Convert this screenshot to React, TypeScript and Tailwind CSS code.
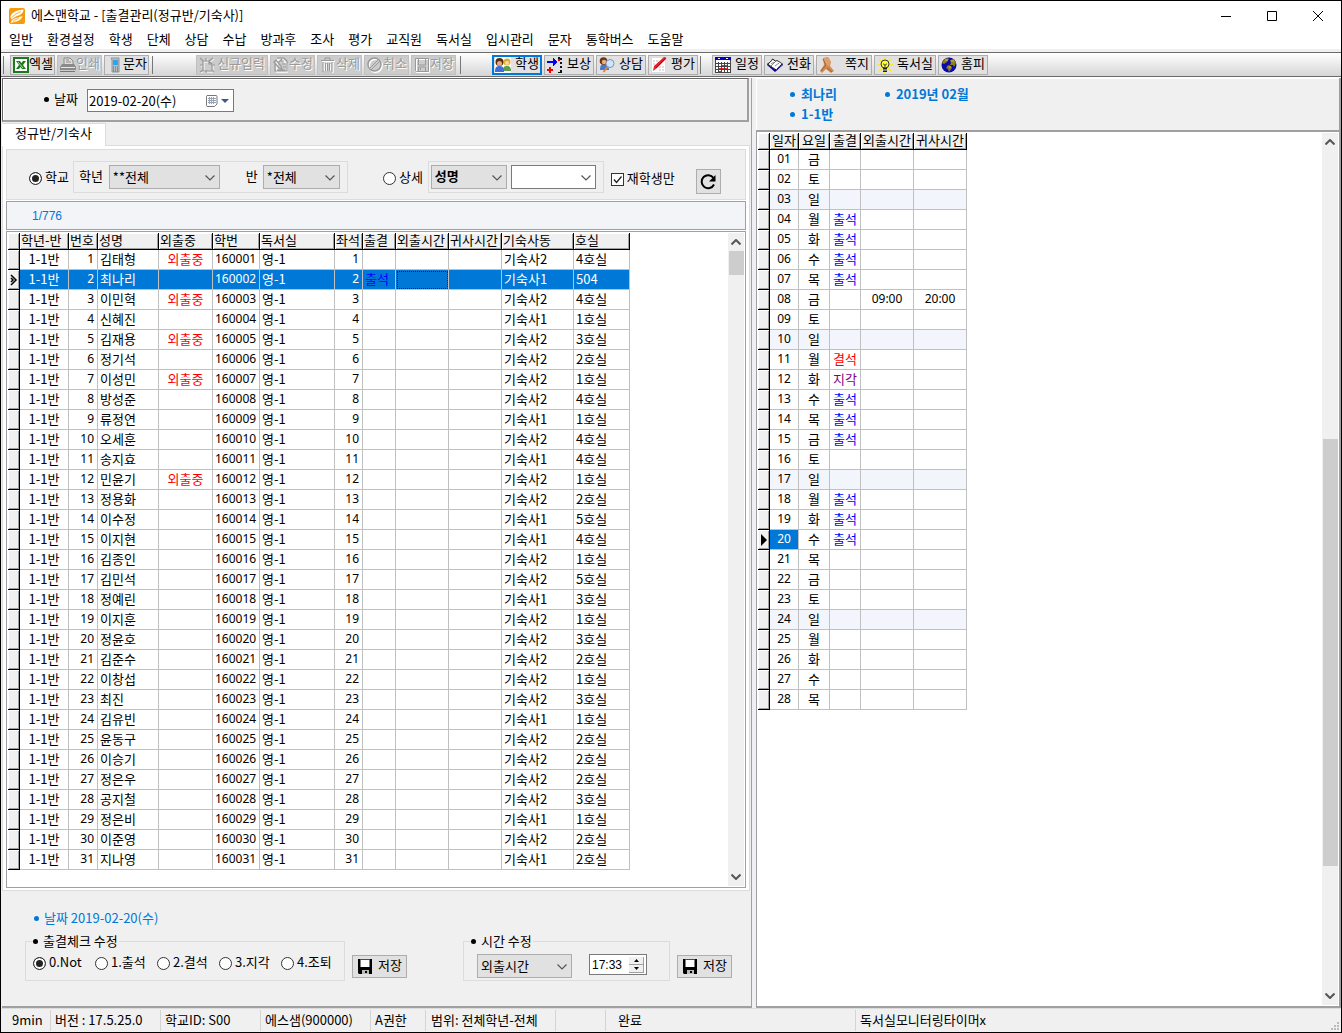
import React from 'react';
import clsx from 'clsx';

type IconProps = { className?: string };

const MENUS = ['일반', '환경설정', '학생', '단체', '상담', '수납', '방과후', '조사', '평가', '교직원', '독서실', '입시관리', '문자', '통학버스', '도움말'];

const AppIcon = () => (
  <svg viewBox="0 0 16 16" className="h-4 w-4 shrink-0">
    <rect width="16" height="16" rx="2" fill="#f59a0c" />
    <path d="M1.500 9C2 5 6 2.500 14.500 1.500c0 3-2 5-5 6-3 1-5 2-7 4Z" fill="#fff" />
    <path d="M2 15c0-4 4-5 11.500-7-.5 3-3 4.500-6 5.500-2.500.5-4 1-5.500 1.500Z" fill="#fff3d8" />
    <path d="M3 9.500c2-3 5-4 9-6M4 13.500c2-2 4-2 6-4" stroke="#f59a0c" strokeWidth=".8" fill="none" />
  </svg>
);

const ExcelIcon = () => (
  <svg viewBox="0 0 16 16" className="h-4 w-4 shrink-0">
    <rect x="1" y="1" width="14" height="14" fill="#fff" stroke="#1c7a1c" strokeWidth="2" />
    <path d="M3 4h4l1.500 2L10 4h3l-3 4 3 4H9L7.500 10 6 12H3l3-4Z" fill="#1c7a1c" />
    <path d="m5 5 5 6" stroke="#b5dcb0" />
  </svg>
);

const PrintIcon = () => (
  <svg viewBox="0 0 16 16" className="h-4 w-4 shrink-0">
    <path d="M4 7V1h6l3 3v3" fill="#ddd" stroke="#8a8a8a" />
    <path d="M6 3h3M6 5h5" stroke="#8a8a8a" />
    <path d="M2 7h12l2 3v3H0v-3Z" fill="#8a8a8a" />
    <path d="M1 10.500h14" stroke="#e6e6e6" />
    <path d="M0 14.500h15" stroke="#777" />
  </svg>
);

const PhoneIcon = () => (
  <svg viewBox="0 0 16 16" className="h-4 w-4 shrink-0">
    <path d="M4 1h8v14H5V3Z" fill="#b6bcc3" stroke="#8c949c" />
    <rect x="6" y="3" width="5" height="5" fill="#26a7f0" />
    <path d="M6 10h1m1 0h1m1 0h1M6 12h1m1 0h1m1 0h1M6 14h1m1 0h1m1 0h1" stroke="#5c6670" />
  </svg>
);

const NewIcon = () => (
  <svg viewBox="0 0 16 16" className="h-4 w-4 shrink-0" fill="none">
    <path d="M5 5h6l3 3v7H5ZM2 2l3 3m6 0 4-3M2 9h3m0 5-3 2M8 4V2" stroke="#fff" />
    <path d="M4 4h6l3 3v7H4ZM10 4v3h3M4 4 1 1m9 3 4-3M1 8h3m0 5-3 2m12-2 2 2M7 4V1m6 7h3M7 13v3" stroke="#999" strokeWidth="1.200" />
  </svg>
);

const EditIcon = () => (
  <svg viewBox="0 0 16 16" className="h-4 w-4 shrink-0" fill="none">
    <path d="M4 3h6l4 4v8H4Z" stroke="#fff" strokeWidth="1.500" />
    <path d="M4 1h7l3 3v10H2V7M1 5l5 6 3 1-1-3-5-6Zm7-1h3m-2 3h4m-3 3h3M4 13h8M6 5l3-3" stroke="#999" strokeWidth="1.200" />
  </svg>
);

const TrashIcon = () => (
  <svg viewBox="0 0 16 16" className="h-4 w-4 shrink-0" fill="none">
    <path d="M2 4.500h13M4 6v9h9V6M7 7v7m3-7v7" stroke="#fff" strokeWidth="1.500" />
    <path d="M1 3.500h13M5 3V1h5v2M3 5v10h9V5M5.500 6v8m2-8v8m2-8v8" stroke="#999" />
  </svg>
);

const CancelIcon = () => (
  <svg viewBox="0 0 16 16" className="h-4 w-4 shrink-0" fill="none">
    <circle cx="8.500" cy="8.500" r="6.500" stroke="#fff" strokeWidth="2" />
    <circle cx="7.500" cy="7.500" r="6.500" stroke="#999" strokeWidth="1.500" />
    <path d="m3 11 8-8m-7 10 9-9" stroke="#999" />
  </svg>
);

const DiskGrayIcon = () => (
  <svg viewBox="0 0 16 16" className="h-4 w-4 shrink-0" fill="none">
    <path d="M2.500 2.500h13v13h-13Z" stroke="#fff" />
    <path d="M1.500 1.500h13v13h-12l-1-1ZM4.500 1v7h7V1M4.500 14v-4h7v4M6.500 11v2" stroke="#999" />
  </svg>
);

const PeopleIcon = () => (
  <svg viewBox="0 0 16 16" className="h-4 w-4 shrink-0">
    <rect width="16" height="16" fill="#fff" />
    <path d="M8 14c0-4 1-5 4-5s4 2 4 5Z" fill="#5aa04a" />
    <circle cx="12" cy="5" r="3.500" fill="#e6a92c" />
    <circle cx="12" cy="6" r="2" fill="#f9d7a8" />
    <path d="M0 15c0-4 1-6 4.500-6S9 11 9 15Z" fill="#3d6fd6" />
    <circle cx="4.500" cy="5" r="4" fill="#5a2d12" />
    <circle cx="4.500" cy="6.500" r="2.500" fill="#e9a877" />
  </svg>
);

const RewardIcon = () => (
  <svg viewBox="0 0 16 16" className="h-4 w-4 shrink-0" shapeRendering="crispEdges">
    <path d="M0 4h6V1l4 4-4 4V6H0Z" fill="#0000f0" />
    <path d="M2 10h2v2h2v2H4v2H2v-2H0v-2h2Z" fill="#f00000" />
    <path d="M11 2h2v2h-2Z" fill="#f00000" />
    <path d="M11 .5h2m1 0v2m0 2v2m0 2v2m0 2v3h-3" stroke="#111" strokeWidth="2" fill="none" />
  </svg>
);

const ConsultIcon = () => (
  <svg viewBox="0 0 16 16" className="h-4 w-4 shrink-0">
    <path d="M1 13c0-4 1-6 4-6s5 2 5 6Z" fill="#4977cf" />
    <circle cx="4.500" cy="4" r="3.800" fill="#6d3414" />
    <circle cx="5" cy="5" r="2.200" fill="#eab07c" />
    <circle cx="11" cy="6.500" r="4" fill="#cfe6fa" stroke="#7e96b0" />
    <path d="m8.500 10-4 5" stroke="#d98b2c" strokeWidth="2" />
  </svg>
);

const GradeIcon = () => (
  <svg viewBox="0 0 16 16" className="h-4 w-4 shrink-0">
    <rect x=".5" y=".5" width="14" height="15" fill="#fff" stroke="#ddd" />
    <path d="M2 4h5M2 7h3m3 3h5m-5 3h5" stroke="#bbb" strokeDasharray="2 1" />
    <path d="M13 0c2 0 3 1 2 2L6 11l-4 3 1-5Z" fill="#e0202c" />
    <path d="m14 2-9 9" stroke="#7a1040" />
  </svg>
);

const CalendarIcon = () => (
  <svg viewBox="0 0 16 16" className="h-4 w-4 shrink-0" shapeRendering="crispEdges">
    <rect x="0" y="1" width="16" height="15" fill="#fff" />
    <rect x="0" y="0" width="16" height="3" fill="#0000d0" />
    <path d="M.5 3v12.500h15V3M3.500 5v10m3-10v10m3-10v10m3-10v10M1 6.500h14m-14 3h14m-14 3h14" stroke="#444" fill="none" />
    <path d="M7 8h2m1 0h2m-5 3h2m1 0h2M4 11h2m-2 3h2" stroke="#f22" />
    <path d="M3 1.500h2m6 0h2" stroke="#fff" />
  </svg>
);

const BookIcon = () => (
  <svg viewBox="0 0 16 16" className="h-4 w-4 shrink-0">
    <path d="m0 8 8 7 8-7V7L9 13 0 7Z" fill="#0000b0" />
    <path d="M.5 7c2-1 4-3 5-5l3 2c2-1 4 1 7 3-2 1-4 3-6 6-2-1-6-4-9-6Z" fill="#fff" stroke="#111" />
    <path d="M9 4 4 9m3-4L4 7m8-1L8 9" stroke="#555" strokeWidth=".7" />
  </svg>
);

const NoteIcon = () => (
  <svg viewBox="0 0 16 16" className="h-4 w-4 shrink-0">
    <path d="M4 1 9 0l3 5-1 4 4 5-3 2-5-4-4 4-2-2 4-6Z" fill="#cf8a50" />
    <path d="m4 1 3 7 3 1 2-4-2-4Z" fill="#dda06c" />
    <path d="m4 2 3 6-5 6m6-3 5 4" stroke="#a4602c" fill="none" />
  </svg>
);

const BulbIcon = () => (
  <svg viewBox="0 0 16 16" className="h-4 w-4 shrink-0">
    <path d="M8 0v16M0 8h16M2 2l12 12M14 2 2 14" stroke="#ffee00" strokeWidth="1.500" />
    <circle cx="8" cy="7" r="4" fill="#ffff30" stroke="#333" />
    <rect x="6" y="11" width="4" height="4" fill="#222" />
    <path d="M6 7h1l1 2 1-2h1M8 9v2" stroke="#555" fill="none" />
    <path d="M6 13h4" stroke="#ddd" />
  </svg>
);

const GlobeIcon = () => (
  <svg viewBox="0 0 16 16" className="h-4 w-4 shrink-0">
    <circle cx="8" cy="8" r="7.500" fill="#0a0aa8" />
    <path d="M3 3c2-2 4-2 5-1L6 5 3 7 1 6Zm6 0 4-1 2 4-2 4-1-2-3 0 1-2Zm-2 5 3 1 1 2-3 4-1-3-2-1Z" fill="#8f7c20" />
    <path d="M4 3h3M10 4h3M8 10h2" stroke="#d8c040" />
  </svg>
);

const DiskIcon = ({ className }: IconProps) => (
  <svg viewBox="0 0 16 16" className={clsx('h-4 w-4 shrink-0', className)}>
    <path d="M1 0h14v15H2l-1-1Z" fill="#000" />
    <path d="M3.500 1h9v7h-9Z" fill="#fff" />
    <path d="M3 .5h10" stroke="#f00" />
    <path d="M5 11h7v4H5Z" fill="#bbb" />
    <path d="M8 12h2v2H8Z" fill="#000" />
  </svg>
);

const Chevron = ({ className }: IconProps) => (
  <svg viewBox="0 0 10 6" className={clsx('pointer-events-none h-[6px] w-[10px]', className)}>
    <path d="m.5 .5 4.500 4.500L9.500 .5" fill="none" stroke="#555" strokeWidth="1.200" />
  </svg>
);

interface ToolProps {
  label: string;
  icon: React.ReactNode;
  width?: string;
  disabled?: boolean;
  active?: boolean;
}

const Tool: React.FC<ToolProps> = ({ label, icon, width = 'w-[49px]', disabled, active }) => (
  <button
    type="button"
    disabled={disabled}
    className={clsx(
      'flex h-5 shrink-0 items-center justify-between whitespace-nowrap border px-[2px]',
      width,
      disabled && 'border-[#c0c0c0] bg-[#cccccc] text-[#9a9a9a] [text-shadow:1px_1px_0_#fff]',
      active && 'border-[#0078d7] bg-[#e1e1e1] outline outline-[#0078d7] -outline-offset-2',
      !disabled && !active && 'border-[#adadad] bg-[#e1e1e1]'
    )}
  >
    {icon}
    <span className="pb-[3px]">{label}</span>
  </button>
);

const Sep = ({ className }: IconProps) => <div className={clsx('h-[18px] w-px shrink-0 bg-[#777]', className)} />;

interface SelectProps {
  id: string;
  label: string;
  value: string;
  className: string;
}

const Select: React.FC<SelectProps> = ({ id, label, value, className }) => (
  <div className={clsx('relative h-6 shrink-0 border', className)}>
    <select id={id} aria-label={label} className="block h-full w-full appearance-none bg-transparent pb-px pl-[3px] outline-none">
      <option>{value}</option>
    </select>
    <Chevron className="absolute right-[4px] top-[9px]" />
  </div>
);

const Radio: React.FC<{ name: string; label: string; checked?: boolean; className?: string }> = ({ name, label, checked, className }) => (
  <label className={clsx('flex items-center gap-[3px] whitespace-nowrap', className)}>
    <input
      type="radio"
      name={name}
      defaultChecked={checked}
      className="h-[13px] w-[13px] shrink-0 appearance-none rounded-full border border-[#333] bg-white checked:bg-[#222] checked:shadow-[inset_0_0_0_2px_#fff]"
    />
    <span className="pb-[2px]">{label}</span>
  </label>
);

const Bullet = ({ className }: IconProps) => <span className={clsx('h-[5px] w-[5px] shrink-0 rounded-full bg-current', className)} />;

const SaveButton = () => (
  <button type="button" className="mt-[23px] flex h-[23px] w-[55px] shrink-0 items-center justify-between border border-[#adadad] bg-[#e1e1e1] px-1">
    <DiskIcon />
    <span className="pb-[3px]">저장</span>
  </button>
);

const ScrollBar: React.FC<{ above: string; thumb: string }> = ({ above, thumb }) => (
  <div className="flex w-4 shrink-0 flex-col items-center bg-[#f0f0f0]">
    <Chevron className="mt-[6px] shrink-0 rotate-180 [&_path]:stroke-2" />
    <div className={clsx('shrink-0', above)} />
    <div className={clsx('w-[15px] shrink-0 bg-[#cdcdcd]', thumb)} />
    <Chevron className="mb-[6px] mt-auto shrink-0 [&_path]:stroke-2" />
  </div>
);

const Th: React.FC<{ children?: React.ReactNode; center?: boolean }> = ({ children, center }) => (
  <th
    className={clsx(
      'h-[17px] whitespace-nowrap border-b border-r border-black bg-[#f0f0f0] p-0 pb-[2px] font-normal leading-[14px] shadow-[inset_1px_1px_0_#fff,inset_-1px_-1px_0_#a0a0a0]',
      center ? 'text-center' : 'pl-px text-left'
    )}
  >
    {children}
  </th>
);

const RowHead: React.FC<{ children?: React.ReactNode }> = ({ children }) => (
  <td className="border-b border-r border-black bg-[#f0f0f0] p-0 shadow-[inset_1px_1px_0_#fff,inset_-1px_-1px_0_#a0a0a0]">{children}</td>
);

const Td: React.FC<{ children?: React.ReactNode; className?: string }> = ({ children, className }) => (
  <td className={clsx('h-5 whitespace-nowrap border-b border-r border-[#c0c0c0] p-0 pb-[2px] leading-[17px]', className)}>{children}</td>
);

const NUM = "font-['Noto_Sans',sans-serif] text-[12px]";

// name, dorm, room, out
const STUDENTS: [string, number, string, boolean?][] = [
  ['김태형', 2, '4호실', true],
  ['최나리', 1, '504'],
  ['이민혁', 2, '4호실', true],
  ['신혜진', 1, '1호실'],
  ['김재용', 2, '3호실', true],
  ['정기석', 2, '2호실'],
  ['이성민', 2, '1호실', true],
  ['방성준', 2, '4호실'],
  ['류정연', 1, '1호실'],
  ['오세훈', 2, '4호실'],
  ['송지효', 1, '4호실'],
  ['민윤기', 2, '1호실', true],
  ['정용화', 2, '2호실'],
  ['이수정', 1, '5호실'],
  ['이지현', 1, '4호실'],
  ['김종인', 2, '1호실'],
  ['김민석', 2, '5호실'],
  ['정예린', 1, '3호실'],
  ['이지훈', 2, '1호실'],
  ['정윤호', 2, '3호실'],
  ['김준수', 2, '2호실'],
  ['이창섭', 2, '1호실'],
  ['최진', 2, '3호실'],
  ['김유빈', 1, '1호실'],
  ['윤동구', 2, '2호실'],
  ['이승기', 2, '2호실'],
  ['정은우', 2, '2호실'],
  ['공지철', 2, '3호실'],
  ['정은비', 1, '1호실'],
  ['이준영', 2, '2호실'],
  ['지나영', 1, '2호실'],
];

const STUDENT_COLS = ['w-[12px]', 'w-[49px]', 'w-[29px]', 'w-[61px]', 'w-[54px]', 'w-[47px]', 'w-[75px]', 'w-[28px]', 'w-[33px]', 'w-[53px]', 'w-[53px]', 'w-[72px]', 'w-[56px]'];

const StudentTable = () => (
  <table className="w-[622px] table-fixed border-separate border-spacing-0 self-start">
    <colgroup>{STUDENT_COLS.map((w, i) => <col key={i} className={w} />)}</colgroup>
    <thead>
      <tr>
        <Th />
        {['학년-반', '번호', '성명', '외출중', '학번', '독서실', '좌석', '출결', '외출시간', '귀사시간', '기숙사동', '호실'].map((h) => (
          <Th key={h}>{h}</Th>
        ))}
      </tr>
    </thead>
    <tbody>
      {STUDENTS.map(([name, dorm, room, out], i) => {
        const selected = i === 1;
        return (
          <tr key={name} className={selected ? 'bg-[#0078d7] text-white' : 'bg-white'}>
            <RowHead>
              {selected && (
                <svg viewBox="0 0 10 12" className="h-3 w-[10px]">
                  <path d="m3 1 5 5-5 5M3 4l2 2-2 2" fill="none" stroke="#000" strokeWidth="1.500" />
                </svg>
              )}
            </RowHead>
            <Td className="text-center">1-1반</Td>
            <Td className={clsx(NUM, 'pr-[3px] text-right')}>{i + 1}</Td>
            <Td className="pl-[2px]">{name}</Td>
            <Td className="text-center text-[#ff0000]">{out && '외출중'}</Td>
            <Td className={clsx(NUM, 'pl-[2px]')}>{160001 + i}</Td>
            <Td className="pl-[2px]">영-1</Td>
            <Td className={clsx(NUM, 'pr-[3px] text-right')}>{i + 1}</Td>
            <Td className="pl-[2px] text-[#0000ff]">{selected && '출석'}</Td>
            <Td className={clsx(selected && 'outline-1 outline-dotted -outline-offset-2 outline-[#331a00]')} />
            <Td />
            <Td className="pl-[2px]">기숙사{dorm}</Td>
            <Td className="pl-[2px]">{room}</Td>
          </tr>
        );
      })}
    </tbody>
  </table>
);

const WEEK = ['금', '토', '일', '월', '화', '수', '목'];
const ATTENDANCE: Record<number, string> = {
  4: '출석', 5: '출석', 6: '출석', 7: '출석', 11: '결석', 12: '지각', 13: '출석', 14: '출석', 15: '출석', 18: '출석', 19: '출석', 20: '출석',
};
const STATUS_COLOR: Record<string, string> = { 출석: 'text-[#0000ff]', 결석: 'text-[#ff0000]', 지각: 'text-[#800080]' };

const MonthTable = () => (
  <table className="w-[209px] table-fixed border-separate border-spacing-0 self-start">
    <colgroup>{['w-[12px]', 'w-[29px]', 'w-[31px]', 'w-[31px]', 'w-[53px]', 'w-[53px]'].map((w, i) => <col key={i} className={w} />)}</colgroup>
    <thead>
      <tr>
        <Th />
        {['일자', '요일', '출결', '외출시간', '귀사시간'].map((h) => <Th key={h} center>{h}</Th>)}
      </tr>
    </thead>
    <tbody>
      {Array.from({ length: 28 }, (_, i) => i + 1).map((day) => {
        const week = WEEK[(day - 1) % 7];
        const status = ATTENDANCE[day];
        const today = day === 20;
        return (
          <tr key={day} className={week === '일' ? 'bg-[#f2f6fc]' : 'bg-white'}>
            <RowHead>
              {today && (
                <svg viewBox="0 0 10 12" className="h-3 w-[10px]">
                  <path d="m3 0 6 6-6 6Z" fill="#000" />
                </svg>
              )}
            </RowHead>
            <Td className={clsx(NUM, 'text-center', today && 'bg-[#0078d7] text-white')}>{String(day).padStart(2, '0')}</Td>
            <Td className="text-center">{week}</Td>
            <Td className={clsx('text-center', status && STATUS_COLOR[status])}>{status}</Td>
            <Td className={clsx(NUM, 'text-center')}>{day === 8 && '09:00'}</Td>
            <Td className={clsx(NUM, 'text-center')}>{day === 8 && '20:00'}</Td>
          </tr>
        );
      })}
    </tbody>
  </table>
);

const TitleBar = () => (
  <header className="flex h-[30px] items-center bg-white pb-px pl-2">
    <AppIcon />
    <h1 className="ml-[6px] pb-px">에스맨학교 - [출결관리(정규반/기숙사)]</h1>
    <div className="ml-auto flex">
      <button type="button" aria-label="최소화" className="flex w-[46px] justify-center">
        <svg viewBox="0 0 10 10" className="h-[10px] w-[10px]"><path d="M0 5.500h10" stroke="#000" /></svg>
      </button>
      <button type="button" aria-label="최대화" className="flex w-[46px] justify-center">
        <svg viewBox="0 0 10 10" className="h-[10px] w-[10px]"><path d="M.5 .5h9v9h-9Z" stroke="#000" fill="none" /></svg>
      </button>
      <button type="button" aria-label="닫기" className="flex w-[46px] justify-center">
        <svg viewBox="0 0 10 10" className="h-[10px] w-[10px]"><path d="m0 0 10 10M10 0 0 10" stroke="#000" /></svg>
      </button>
    </div>
  </header>
);

const Toolbar = () => (
  <div className="flex h-[25px] items-center gap-[2px] border-y border-[#6b6b6b] bg-gradient-to-b from-white to-[#d6d6d6] pl-[2px]">
    <Sep className="mr-1" />
    <Tool label="엑셀" icon={<ExcelIcon />} width="w-[45px]" />
    <Tool label="인쇄" icon={<PrintIcon />} width="w-[45px]" disabled />
    <Tool label="문자" icon={<PhoneIcon />} width="w-[45px]" />
    <Sep className="ml-px mr-[41px]" />
    <Tool label="신규입력" icon={<NewIcon />} width="w-[72px]" disabled />
    <Tool label="수정" icon={<EditIcon />} width="w-[45px]" disabled />
    <Tool label="삭제" icon={<TrashIcon />} width="w-[45px]" disabled />
    <Tool label="취소" icon={<CancelIcon />} width="w-[45px]" disabled />
    <Tool label="저장" icon={<DiskGrayIcon />} width="w-[45px]" disabled />
    <Sep className="ml-[2px] mr-[29px]" />
    <Tool label="학생" icon={<PeopleIcon />} width="w-[50px]" active />
    <Tool label="보상" icon={<RewardIcon />} width="w-[50px]" />
    <Tool label="상담" icon={<ConsultIcon />} width="w-[50px]" />
    <Tool label="평가" icon={<GradeIcon />} width="w-[50px]" />
    <Sep className="mr-[9px]" />
    <Tool label="일정" icon={<CalendarIcon />} width="w-[50px]" />
    <Tool label="전화" icon={<BookIcon />} width="w-[50px]" />
    <Tool label="쪽지" icon={<NoteIcon />} width="w-[56px]" />
    <Tool label="독서실" icon={<BulbIcon />} width="w-[62px]" />
    <Tool label="홈피" icon={<GlobeIcon />} width="w-[50px]" />
  </div>
);

const DatePanel = () => (
  <div className="mr-[2px] flex h-[44px] items-center border-2 border-l border-t border-[#a0a0a0] border-l-[#696969] border-t-[#696969] pl-[41px] shadow-[inset_1px_1px_0_#fff]">
    <Bullet />
    <label htmlFor="date" className="ml-[5px] pb-[2px]">날짜</label>
    <div className="ml-[9px] mt-[2px] flex h-[23px] w-[147px] items-center border border-[#7a7a7a] bg-white">
      <input id="date" defaultValue="2019-02-20(수)" className="w-[118px] bg-transparent pl-px outline-none" />
      <button type="button" aria-label="달력" className="flex items-center gap-[3px]">
        <svg viewBox="0 0 12 12" className="h-3 w-3">
          <path d="M1 .5h9a1 1 0 0 1 1 1V9l-2.500 2.500H1a1 1 0 0 1-.5-1v-9Z" fill="#fff" stroke="#777" />
          <path d="M2 3.500h8M2 5.500h8M2 7.500h8M3.500 2v7m2-7v7m2-7v7" stroke="#9aa3b5" />
        </svg>
        <svg viewBox="0 0 8 4" className="h-1 w-2"><path d="M0 0h8L4 4Z" fill="#3c5a82" /></svg>
      </button>
    </div>
  </div>
);

const FilterPanel = () => (
  <div className="flex h-[51px] items-center border border-[#dcdcdc] bg-[#f0f0f0] pl-[22px]">
    <Radio name="scope" label="학교" checked className="mt-[7px]" />
    <div className="ml-1 mt-[4px] flex h-8 w-[275px] items-center border border-[#dcdcdc] pl-[5px]">
      <label htmlFor="grade" className="pb-[2px]">학년</label>
      <Select id="grade" label="학년" value="**전체" className="ml-[6px] mt-px w-[111px] border-[#adadad] bg-[#e1e1e1]" />
      <label htmlFor="class" className="ml-[26px] pb-[2px]">반</label>
      <Select id="class" label="반" value="*전체" className="ml-[5px] mt-px w-[77px] border-[#adadad] bg-[#e1e1e1]" />
    </div>
    <Radio name="scope" label="상세" className="ml-[35px] mt-[7px]" />
    <div className="ml-[5px] mt-[4px] flex h-8 w-[176px] items-center gap-1 border border-[#dcdcdc] pl-[2px]">
      <Select id="field" label="검색 항목" value="성명" className="w-[76px] border-[#adadad] bg-[#e1e1e1] font-bold" />
      <Select id="keyword" label="검색어" value="" className="w-[85px] border-[#7a7a7a] bg-white" />
    </div>
    <label className="ml-[7px] mt-[9px] flex items-center gap-[3px]">
      <span className="relative flex">
        <input type="checkbox" defaultChecked className="peer h-[13px] w-[13px] appearance-none border border-[#333] bg-white" />
        <svg viewBox="0 0 13 13" className="pointer-events-none absolute inset-0 hidden h-[13px] w-[13px] peer-checked:block">
          <path d="m3 6.500 2.500 3 5-6" fill="none" stroke="#222" strokeWidth="1.300" />
        </svg>
      </span>
      <span className="pb-[2px]">재학생만</span>
    </label>
    <button type="button" aria-label="새로고침" className="ml-[21px] mt-[14px] flex h-[25px] w-[25px] items-center justify-center border border-[#adadad] bg-[#e1e1e1]">
      <svg viewBox="0 0 18 18" className="h-[18px] w-[18px]">
        <path d="M14.500 5A6.500 6.500 0 1 0 15 11.500" fill="none" stroke="#000" strokeWidth="2" />
        <path d="M16.500 2v6.500H10Z" fill="#000" />
      </svg>
    </button>
  </div>
);

const EditPanel = () => (
  <div className="border-b-2 border-[#a0a0a0] pb-[25px] pt-[18px]">
    <p className="flex h-[18px] items-center pl-[32px] text-[#0078d7]">
      <Bullet />
      <span className="ml-[5px] pb-px">날짜 2019-02-20(수)</span>
    </p>
    <div className="mt-[5px] flex pl-[23px]">
      <fieldset className="h-[49px] w-[320px] min-w-0 shrink-0 border border-[#dcdcdc] pl-[7px]">
        <legend className="flex h-[18px] items-center gap-[5px] pr-px"><Bullet />출결체크 수정</legend>
        <div className="mt-1 flex h-[18px] items-center">
          {['0.Not', '1.출석', '2.결석', '3.지각', '4.조퇴'].map((label, i) => (
            <Radio key={label} name="attendance" label={label} checked={i === 0} className="w-[62px] shrink-0" />
          ))}
        </div>
      </fieldset>
      <div className="ml-[7px]"><SaveButton /></div>
      <fieldset className="ml-[56px] h-[49px] w-[207px] min-w-0 shrink-0 border border-[#dcdcdc] pl-[7px]">
        <legend className="flex h-[18px] items-center gap-[5px] pr-px"><Bullet />시간 수정</legend>
        <div className="mt-1 flex items-start pl-[6px]">
          <Select id="kind" label="시간 구분" value="외출시간" className="w-[95px] border-[#adadad] bg-[#e1e1e1]" />
          <div className="ml-[17px] flex h-[21px] w-[58px] items-center border border-[#7a7a7a] bg-white">
            <input aria-label="시간" defaultValue="17:33" className="w-[39px] bg-transparent pl-[2px] font-['Liberation_Sans',sans-serif] text-[12px] outline-none" />
            <div className="flex flex-col">
              {['올림', '내림'].map((name, i) => (
                <button key={name} type="button" aria-label={name} className="flex h-2 w-[15px] items-center justify-center border-b border-r border-[#a0a0a0] bg-[#f0f0f0]">
                  <svg viewBox="0 0 5 3" className={clsx('h-[3px] w-[5px]', i === 1 && 'rotate-180')}><path d="M0 3h5L2.500 0Z" /></svg>
                </button>
              ))}
            </div>
          </div>
        </div>
      </fieldset>
      <div className="ml-[7px]"><SaveButton /></div>
    </div>
  </div>
);

const STATUS = [
  { text: '9min', cls: 'w-[50px] pl-[11px]' },
  { text: '버전 : 17.5.25.0', cls: 'w-[110px] pl-1' },
  { text: '학교ID: S00', cls: 'w-[100px] pl-1' },
  { text: '에스샘(900000)', cls: 'w-[110px] pl-1' },
  { text: 'A권한', cls: 'w-[55px] pl-1' },
  { text: '범위: 전체학년-전체', cls: 'w-[130px] pl-[5px]' },
  { text: '', cls: 'w-[50px]' },
  { text: '완료', cls: 'w-[250px] pl-3' },
];

const StatusBar = () => (
  <footer className="flex h-6 items-center border-t border-[#dcdcdc]">
    {STATUS.map(({ text, cls }, i) => (
      <span key={i} className={clsx('h-[21px] shrink-0 whitespace-nowrap border-r border-[#d4d4d4] leading-5', cls)}>{text}</span>
    ))}
    <span className="h-[21px] pl-1 leading-5">독서실모니터링타이머x</span>
    <svg viewBox="0 0 10 10" className="mb-px ml-auto mr-px h-[10px] w-[10px] self-end" fill="#bbb">
      <path d="M7 1h2v2H7ZM4 4h2v2H4Zm3 0h2v2H7ZM1 7h2v2H1Zm3 0h2v2H4Zm3 0h2v2H7Z" />
    </svg>
  </footer>
);

export default function App() {
  return (
    <div className="flex min-h-screen flex-col border border-black bg-[#f0f0f0] font-['Noto_Sans_CJK_KR','Noto_Sans',sans-serif] text-[13px] leading-[18px] text-black">
      <TitleBar />
      <nav className="flex h-[18px] items-center gap-[14px] bg-white pb-[2px] pl-2">
        {MENUS.map((m) => <a key={m} href="#" className="shrink-0">{m}</a>)}
      </nav>
      <div className="h-[3px]" />
      <Toolbar />
      <main className="flex flex-1 border-t border-white">
        <section className="flex w-[751px] shrink-0 flex-col border-r border-[#a0a0a0] pl-px">
          <DatePanel />
          <div className="mt-px flex h-[22px]">
            <button type="button" className="relative -mb-px w-[104px] border-r border-t border-[#dcdcdc] bg-white pb-1">정규반/기숙사</button>
          </div>
          <div className="mr-px flex flex-1 flex-col gap-px border border-[#dcdcdc] bg-white px-[3px] pb-[2px] pt-[3px]">
            <FilterPanel />
            <div className="flex h-[29px] items-center border border-[#a0a0a0] bg-[#f2f4f7] pl-[25px] font-['Liberation_Sans',sans-serif] text-[12px] text-[#0078d7]">1/776</div>
            <div className="flex flex-1 justify-between border border-[#a0a0a8] p-px">
              <StudentTable />
              <ScrollBar above="h-[6px]" thumb="h-6" />
            </div>
          </div>
          <EditPanel />
        </section>
        <section className="ml-1 flex flex-1 flex-col border-b-2 border-r-2 border-[#a0a0a0]">
          <div className="flex h-[54px] items-start gap-[48px] border-b-2 border-b-[#a0a0a0] pl-[34px] pt-[6px] font-bold leading-5 text-[#0078d7] shadow-[inset_1px_1px_0_#fff]">
            <div>
              <p className="flex items-center gap-[6px]"><Bullet />최나리</p>
              <p className="flex items-center gap-[6px]"><Bullet />1-1반</p>
            </div>
            <p className="flex items-center gap-[6px]"><Bullet />2019년 02월</p>
          </div>
          <div className="flex flex-1 justify-between border-l border-[#a0a0a8] bg-white p-px">
            <MonthTable />
            <ScrollBar above="h-[294px]" thumb="h-[427px]" />
          </div>
        </section>
      </main>
      <StatusBar />
    </div>
  );
}
